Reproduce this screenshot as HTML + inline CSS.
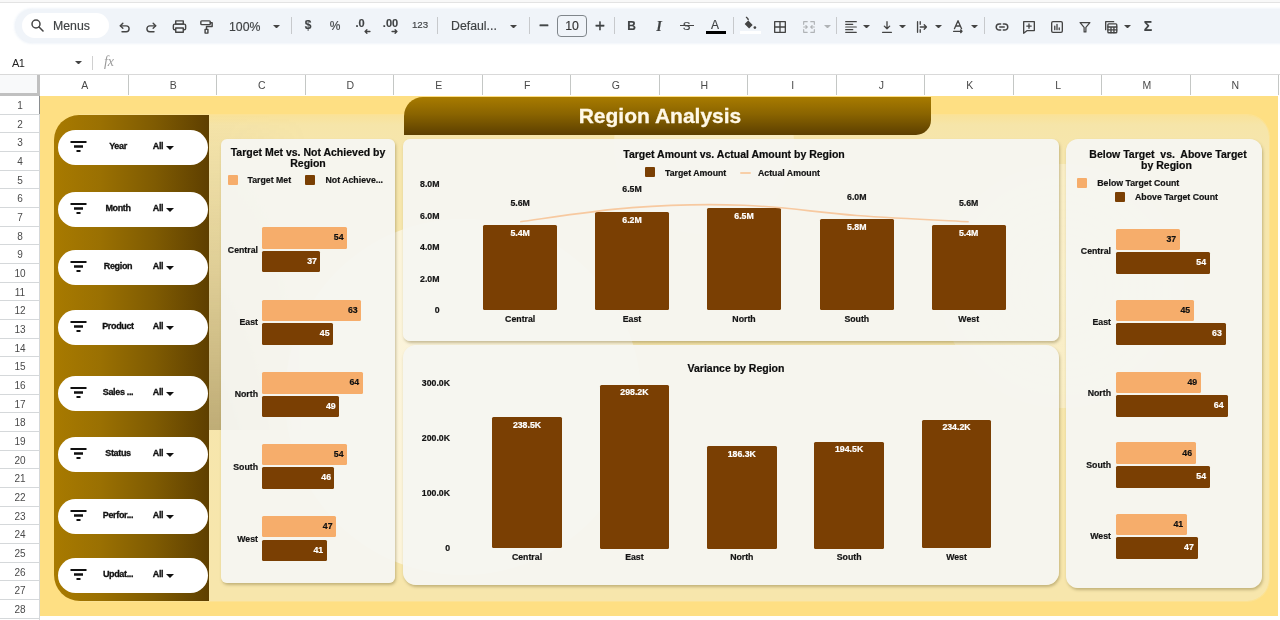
<!DOCTYPE html>
<html lang="en"><head><meta charset="utf-8"><title>Region Analysis</title>
<style>
*{box-sizing:border-box;margin:0;padding:0}
html,body{width:1280px;height:620px;overflow:hidden;background:#fff}
body{font-family:"Liberation Sans",Arial,sans-serif;position:relative;color:#222}
.abs{position:absolute}
.t{position:absolute;white-space:nowrap;line-height:10px;}
.c{transform:translate(-50%,-50%)}
.r{transform:translate(-100%,-50%)}
.l{transform:translate(0,-50%)}
.b{font-weight:bold}
.tb{color:#3f4244;font-size:12.3px;line-height:14px;-webkit-text-stroke:.15px currentColor}
.colh{position:absolute;top:75px;height:20px;border-right:1px solid #c4c7c5;font-size:10.5px;color:#4a4a4a;text-align:center;line-height:21px;background:#fff;padding-left:2px}
.rowh{position:absolute;left:0;width:40px;border-bottom:1px solid #d5d8da;font-size:10px;color:#4a4a4a;text-align:center;background:#fff}
.pill{position:absolute;left:58px;width:150px;height:35px;border-radius:17.5px;background:#fff}
.pill .t{font-size:9px;font-weight:bold;color:#111;top:16px;letter-spacing:-0.35px;-webkit-text-stroke:.3px #111}
.card{position:absolute;background:rgba(245,245,241,.95);box-shadow:1px 2px 3px rgba(110,95,40,.38)}
.ct{line-height:12px;font-size:10.5px;font-weight:bold;color:#0c0c0c;-webkit-text-stroke:.2px #0c0c0c}
.ax{font-size:8.75px;font-weight:bold;color:#141414;-webkit-text-stroke:.2px currentColor}
.bl{background:#f6ad6b;position:absolute;border-radius:1.5px}
.bd{background:#7a3f03;position:absolute;border-radius:1.5px}
.sep{position:absolute;top:17px;height:17px;width:1px;background:#c7c9cc}
</style></head><body>
<div id="root" style="position:absolute;left:0;top:0;width:1280px;height:620px;overflow:hidden;will-change:transform">

<div class="abs" style="left:0;top:0;width:1280px;height:3px;background:#f8f8f8;border-bottom:1px solid #e3e3e3"></div>
<div class="abs" style="left:15px;top:8.500px;width:1300px;height:34.500px;border-radius:17px;background:#f0f4f9;box-shadow:0 0 2px 1px rgba(240,244,249,.9)"></div>
<div class="abs" style="left:22px;top:13px;width:87px;height:25px;border-radius:12.500px;background:#fff"></div>
<svg class="abs" style="left:30px;top:18px" width="15" height="15" viewBox="0 0 15 15"><circle cx="6" cy="6" r="4" fill="none" stroke="#444" stroke-width="1.500"/><path d="M9 9 L13 13" stroke="#444" stroke-width="1.600" stroke-linecap="round"/></svg>
<div class="t l tb" style="left:53px;top:26px">Menus</div>
<div class="t l tb" style="left:229px;top:26.500px">100%</div>
<div class="t c tb b" style="left:308px;top:25px;font-size:12px">$</div>
<div class="t c tb" style="left:335px;top:25.500px;font-size:12px">%</div>
<div class="t c tb b" style="left:360px;top:22.700px;font-size:11px">.0</div>
<div class="t c tb b" style="left:390.500px;top:22.700px;font-size:11px">.00</div>
<div class="t c tb" style="left:420px;top:24.800px;font-size:9.700px">123</div>
<div class="t l tb" style="left:451px;top:25.500px">Defaul...</div>
<div class="abs" style="left:557px;top:15px;width:30px;height:22px;border:1px solid #80868b;border-radius:4px"></div>
<div class="t c tb" style="left:572px;top:26px;color:#333">10</div>
<div class="t c tb" style="left:544px;top:26px;font-size:17px;-webkit-text-stroke:.4px currentColor">&#8722;</div>
<div class="t c tb" style="left:600px;top:26px;font-size:17px;-webkit-text-stroke:.4px currentColor">+</div>
<div class="t c tb b" style="left:631.500px;top:26px;font-size:12px">B</div>
<div class="t c tb" style="left:659px;top:26px;font-size:14.5px;font-style:italic;font-weight:bold;font-family:'Liberation Serif',serif">I</div>
<div class="t c tb" style="left:686.500px;top:25.500px;font-size:11.500px">S</div>
<div class="abs" style="left:680px;top:24.800px;width:14px;height:1.400px;background:#444"></div>
<div class="t c tb" style="left:715px;top:24.500px;font-size:12px">A</div>
<div class="abs" style="left:705.500px;top:31px;width:20px;height:3px;background:#000"></div>
<div class="abs" style="left:740px;top:31px;width:21px;height:3px;background:#fff"></div>
<div class="t c tb b" style="left:1148px;top:26px;font-size:14px">&#931;</div>
<div class="sep" style="left:291px"></div>
<div class="sep" style="left:437px"></div>
<div class="sep" style="left:529px"></div>
<div class="sep" style="left:614px"></div>
<div class="sep" style="left:733px"></div>
<div class="sep" style="left:836px"></div>
<div class="sep" style="left:984px"></div>
<svg class="abs" style="left:272.5px;top:24.55px" width="7" height="3.5" viewBox="0 0 8 4"><path d="M0 0h8L4 4z" fill="#444"/></svg>
<svg class="abs" style="left:509.5px;top:24.55px" width="7" height="3.5" viewBox="0 0 8 4"><path d="M0 0h8L4 4z" fill="#444"/></svg>
<svg class="abs" style="left:863.0px;top:24.55px" width="7" height="3.5" viewBox="0 0 8 4"><path d="M0 0h8L4 4z" fill="#444"/></svg>
<svg class="abs" style="left:898.5px;top:24.55px" width="7" height="3.5" viewBox="0 0 8 4"><path d="M0 0h8L4 4z" fill="#444"/></svg>
<svg class="abs" style="left:934.5px;top:24.55px" width="7" height="3.5" viewBox="0 0 8 4"><path d="M0 0h8L4 4z" fill="#444"/></svg>
<svg class="abs" style="left:970.5px;top:24.55px" width="7" height="3.5" viewBox="0 0 8 4"><path d="M0 0h8L4 4z" fill="#444"/></svg>
<svg class="abs" style="left:1123.5px;top:24.55px" width="7" height="3.5" viewBox="0 0 8 4"><path d="M0 0h8L4 4z" fill="#444"/></svg>
<svg class="abs" style="left:823.5px;top:24.55px" width="7" height="3.5" viewBox="0 0 8 4"><path d="M0 0h8L4 4z" fill="#b0b3b6"/></svg>
<svg class="abs" style="left:116.5px;top:19.5px" width="15" height="15" viewBox="0 0 18 18" fill="none" stroke="#444" stroke-width="1.7" stroke-linecap="round" stroke-linejoin="round"><path d="M4 7h7a3.500 3.500 0 0 1 0 7H6"/><path d="M7 4L4 7l3 3"/></svg>
<svg class="abs" style="left:143.5px;top:19.5px" width="15" height="15" viewBox="0 0 18 18" fill="none" stroke="#444" stroke-width="1.7" stroke-linecap="round" stroke-linejoin="round"><path d="M14 7H7a3.500 3.500 0 0 0 0 7h5"/><path d="M11 4l3 3-3 3"/></svg>
<svg class="abs" style="left:171.0px;top:18.0px" width="17" height="17" viewBox="0 0 18 18" fill="none" stroke="#444" stroke-width="1.5" stroke-linecap="round" stroke-linejoin="round"><rect x="5" y="3" width="8" height="3.500"/><rect x="2.500" y="6.500" width="13" height="6" rx="1.500"/><rect x="5" y="10.500" width="8" height="4.500" fill="#f0f4f9"/></svg>
<svg class="abs" style="left:198.0px;top:18.0px" width="17" height="17" viewBox="0 0 18 18" fill="none" stroke="#444" stroke-width="1.5" stroke-linecap="round" stroke-linejoin="round"><rect x="3" y="3" width="10" height="4" rx="1"/><path d="M13 5h2v4H9v3"/><rect x="7.500" y="12" width="3" height="4"/></svg>
<svg class="abs" style="left:361.5px;top:25.7px" width="11" height="11" viewBox="0 0 18 18" fill="none" stroke="#444" stroke-width="2.2" stroke-linecap="round" stroke-linejoin="round"><path d="M5 9h8M8 6L5 9l3 3"/></svg>
<svg class="abs" style="left:389.0px;top:25.7px" width="11" height="11" viewBox="0 0 18 18" fill="none" stroke="#444" stroke-width="2.2" stroke-linecap="round" stroke-linejoin="round"><path d="M5 9h8M10 6l3 3-3 3"/></svg>
<svg class="abs" style="left:742.0px;top:15.5px" width="16" height="16" viewBox="0 0 18 18" fill="none" stroke="#444" stroke-width="1.5" stroke-linecap="round" stroke-linejoin="round"><path d="M5.500 3.500l6.500 6.500-4 4-5-5 5-5z" fill="#444" stroke="none"/><path d="M5 1.500l2 2"/><circle cx="14.500" cy="13" r="1.500" fill="#444" stroke="none"/></svg>
<svg class="abs" style="left:772.0px;top:18.5px" width="16" height="16" viewBox="0 0 18 18" fill="none" stroke="#444" stroke-width="1.5" stroke-linecap="round" stroke-linejoin="round"><rect x="3" y="3" width="12" height="12"/><path d="M9 3v12M3 9h12"/></svg>
<svg class="abs" style="left:801.0px;top:18.5px" width="16" height="16" viewBox="0 0 18 18" fill="none" stroke="#b0b3b6" stroke-width="1.3" stroke-linecap="round" stroke-linejoin="round"><path d="M7 3H3v3M11 3h4v3M7 15H3v-3M11 15h4v-3M3 9h4M5.500 7.500L7 9l-1.500 1.500M15 9h-4M12.500 7.500L11 9l1.500 1.500"/></svg>
<svg class="abs" style="left:843.0px;top:18.5px" width="16" height="16" viewBox="0 0 18 18" fill="none" stroke="#444" stroke-width="1.3" stroke-linecap="round" stroke-linejoin="round"><path d="M3 3h12M3 6h8M3 9h12M3 12h8M3 15h12"/></svg>
<svg class="abs" style="left:879.0px;top:18.5px" width="16" height="16" viewBox="0 0 18 18" fill="none" stroke="#444" stroke-width="1.5" stroke-linecap="round" stroke-linejoin="round"><path d="M9 3v8M6 8l3 3 3-3M4 15h10"/></svg>
<svg class="abs" style="left:914.0px;top:18.5px" width="16" height="16" viewBox="0 0 18 18" fill="none" stroke="#444" stroke-width="1.5" stroke-linecap="round" stroke-linejoin="round"><path d="M4 3v12M7 9h7M11.500 6.500l2.500 2.500-2.500 2.500M7 3v3M7 12v3"/></svg>
<svg class="abs" style="left:950.0px;top:18.0px" width="16" height="16" viewBox="0 0 18 18" fill="none" stroke="#444" stroke-width="1.5" stroke-linecap="round" stroke-linejoin="round"><path d="M5 12l4-9 4 9M6.500 9h5M4 15h9M12 13.500l1.500 1.500-1.500 1.500"/></svg>
<svg class="abs" style="left:993.5px;top:18.5px" width="16" height="16" viewBox="0 0 18 18" fill="none" stroke="#444" stroke-width="1.7" stroke-linecap="round" stroke-linejoin="round"><path d="M7.500 5.500H6a3.500 3.500 0 0 0 0 7h1.500M10.500 5.500H12a3.500 3.500 0 0 1 0 7h-1.500M6.500 9h5"/></svg>
<svg class="abs" style="left:1021.0px;top:18.5px" width="16" height="16" viewBox="0 0 18 18" fill="none" stroke="#444" stroke-width="1.5" stroke-linecap="round" stroke-linejoin="round"><path d="M3 3h12v10H7l-4 3z"/><path d="M9 5.500v5M6.500 8h5"/></svg>
<svg class="abs" style="left:1049.0px;top:18.5px" width="16" height="16" viewBox="0 0 18 18" fill="none" stroke="#444" stroke-width="1.5" stroke-linecap="round" stroke-linejoin="round"><rect x="3" y="3" width="12" height="12" rx="1.500"/><path d="M6.500 12V8M9 12V6M11.500 12v-2"/></svg>
<svg class="abs" style="left:1076.5px;top:18.5px" width="16" height="16" viewBox="0 0 18 18" fill="none" stroke="#444" stroke-width="1.4" stroke-linecap="round" stroke-linejoin="round"><path d="M3.500 4h11l-4.500 5.500V14.500H8V9.500z"/></svg>
<svg class="abs" style="left:1102.5px;top:18.5px" width="16" height="16" viewBox="0 0 18 18" fill="none" stroke="#444" stroke-width="1.5" stroke-linecap="round" stroke-linejoin="round"><path d="M3 12V3h9"/><rect x="5.500" y="5.500" width="10" height="10" rx="1"/><path d="M5.500 9h10M9 9v6.500M12.300 9v6.500M5.500 12.300h10"/></svg>
<div class="t l" style="left:12px;top:62.5px;font-size:11px;color:#222;letter-spacing:-0.5px">A1</div>
<svg class="abs" style="left:74.5px;top:60.75px" width="7" height="3.5" viewBox="0 0 8 4"><path d="M0 0h8L4 4z" fill="#444"/></svg>
<div class="abs" style="left:92px;top:56px;width:1px;height:14px;background:#d0d0d0"></div>
<div class="t c" style="left:109px;top:62px;font-size:14px;color:#9a9a9a;font-style:italic;font-family:'Liberation Serif',serif">fx</div>
<div class="abs" style="left:0;top:74px;width:1280px;height:1px;background:#d9d9d9"></div>
<div class="abs" style="left:0;top:75px;width:40px;height:21px;background:#f8f9fa;border-right:3px solid #c0c0c0;border-bottom:3px solid #c0c0c0"></div>
<div class="colh" style="left:40.0px;width:88.5px">A</div>
<div class="colh" style="left:128.5px;width:88.5px">B</div>
<div class="colh" style="left:217.0px;width:88.5px">C</div>
<div class="colh" style="left:305.5px;width:88.5px">D</div>
<div class="colh" style="left:394.0px;width:88.5px">E</div>
<div class="colh" style="left:482.5px;width:88.5px">F</div>
<div class="colh" style="left:571.0px;width:88.5px">G</div>
<div class="colh" style="left:659.5px;width:88.5px">H</div>
<div class="colh" style="left:748.0px;width:88.5px">I</div>
<div class="colh" style="left:836.5px;width:88.5px">J</div>
<div class="colh" style="left:925.0px;width:88.5px">K</div>
<div class="colh" style="left:1013.5px;width:88.5px">L</div>
<div class="colh" style="left:1102.0px;width:88.5px">M</div>
<div class="colh" style="left:1190.5px;width:88.5px">N</div>
<div class="rowh" style="top:96.00px;height:18.67px;line-height:19.37px">1</div>
<div class="rowh" style="top:114.67px;height:18.67px;line-height:19.37px">2</div>
<div class="rowh" style="top:133.34px;height:18.67px;line-height:19.37px">3</div>
<div class="rowh" style="top:152.01px;height:18.67px;line-height:19.37px">4</div>
<div class="rowh" style="top:170.68px;height:18.67px;line-height:19.37px">5</div>
<div class="rowh" style="top:189.35px;height:18.67px;line-height:19.37px">6</div>
<div class="rowh" style="top:208.02px;height:18.67px;line-height:19.37px">7</div>
<div class="rowh" style="top:226.69px;height:18.67px;line-height:19.37px">8</div>
<div class="rowh" style="top:245.36px;height:18.67px;line-height:19.37px">9</div>
<div class="rowh" style="top:264.03px;height:18.67px;line-height:19.37px">10</div>
<div class="rowh" style="top:282.70px;height:18.67px;line-height:19.37px">11</div>
<div class="rowh" style="top:301.37px;height:18.67px;line-height:19.37px">12</div>
<div class="rowh" style="top:320.04px;height:18.67px;line-height:19.37px">13</div>
<div class="rowh" style="top:338.71px;height:18.67px;line-height:19.37px">14</div>
<div class="rowh" style="top:357.38px;height:18.67px;line-height:19.37px">15</div>
<div class="rowh" style="top:376.05px;height:18.67px;line-height:19.37px">16</div>
<div class="rowh" style="top:394.72px;height:18.67px;line-height:19.37px">17</div>
<div class="rowh" style="top:413.39px;height:18.67px;line-height:19.37px">18</div>
<div class="rowh" style="top:432.06px;height:18.67px;line-height:19.37px">19</div>
<div class="rowh" style="top:450.73px;height:18.67px;line-height:19.37px">20</div>
<div class="rowh" style="top:469.40px;height:18.67px;line-height:19.37px">21</div>
<div class="rowh" style="top:488.07px;height:18.67px;line-height:19.37px">22</div>
<div class="rowh" style="top:506.74px;height:18.67px;line-height:19.37px">23</div>
<div class="rowh" style="top:525.41px;height:18.67px;line-height:19.37px">24</div>
<div class="rowh" style="top:544.08px;height:18.67px;line-height:19.37px">25</div>
<div class="rowh" style="top:562.75px;height:18.67px;line-height:19.37px">26</div>
<div class="rowh" style="top:581.42px;height:18.67px;line-height:19.37px">27</div>
<div class="rowh" style="top:600.09px;height:18.67px;line-height:19.37px">28</div>
<div class="abs" style="left:39px;top:96px;width:1px;height:524px;background:#d5d8da"></div>
<div class="abs" style="left:39px;top:96px;width:2px;height:18px;background:#8a8d90"></div>
<div class="abs" style="left:40px;top:96px;width:1238px;height:520px;background:#fedf83"></div>
<div class="abs" style="left:80px;top:114.5px;width:1189px;height:486.5px;border-radius:0 22px 22px 0;background:linear-gradient(180deg,#f9e299 0,#f6e5a9 10px,#f6e6ad 40px,#f7e6ac 100%);box-shadow:0 0 0 1px rgba(250,228,160,.6)"></div>
<div class="abs" style="left:54px;top:114px;width:1215px;height:487px;border-radius:24px 22px 22px 28px;background:radial-gradient(circle at 409px 283px,rgba(255,255,255,.56) 0,rgba(255,255,255,.56) 177.5px,rgba(255,255,255,0) 178.5px),radial-gradient(circle at 1008px 172px,rgba(255,255,255,.36) 0,rgba(255,255,255,.3) 121.5px,rgba(255,255,255,0) 122.5px),radial-gradient(circle at 650px 30px,rgba(255,255,255,.3) 0,rgba(255,255,255,.3) 89.5px,rgba(255,255,255,0) 90.5px)"></div>
<div class="abs" style="left:209px;top:115px;width:100px;height:315px;background:linear-gradient(180deg,rgba(140,120,70,0) 0%,rgba(140,120,70,.22) 50%,rgba(130,110,60,.48) 100%);-webkit-mask-image:linear-gradient(90deg,#000 0,#000 15%,rgba(0,0,0,.5) 60%,transparent 100%);mask-image:linear-gradient(90deg,#000 0,#000 15%,rgba(0,0,0,.5) 60%,transparent 100%)"></div>
<div class="abs" style="left:54px;top:115px;width:155px;height:486px;border-radius:25px 0 0 26px;background:linear-gradient(90deg,#a87a00 0%,#9a7002 30%,#7f5b02 65%,#5e3f00 100%)"></div>
<div class="pill" style="top:130px"><svg class="abs" style="left:11.5px;top:11px" width="18" height="13" viewBox="0 0 18 13"><path d="M0.5 0h16v2h-16zM4 4.3h9v2.4h-9zM6.5 9h4v2h-4z" fill="#111"/></svg><div class="t c" style="left:60px">Year</div><div class="t c" style="left:100px">All</div><svg class="abs" style="left:108px;top:16px" width="8" height="4" viewBox="0 0 8 4"><path d="M0 0h8L4 4z" fill="#111"/></svg></div>
<div class="pill" style="top:192px"><svg class="abs" style="left:11.5px;top:11px" width="18" height="13" viewBox="0 0 18 13"><path d="M0.5 0h16v2h-16zM4 4.3h9v2.4h-9zM6.5 9h4v2h-4z" fill="#111"/></svg><div class="t c" style="left:60px">Month</div><div class="t c" style="left:100px">All</div><svg class="abs" style="left:108px;top:16px" width="8" height="4" viewBox="0 0 8 4"><path d="M0 0h8L4 4z" fill="#111"/></svg></div>
<div class="pill" style="top:250.4px"><svg class="abs" style="left:11.5px;top:11px" width="18" height="13" viewBox="0 0 18 13"><path d="M0.5 0h16v2h-16zM4 4.3h9v2.4h-9zM6.5 9h4v2h-4z" fill="#111"/></svg><div class="t c" style="left:60px">Region</div><div class="t c" style="left:100px">All</div><svg class="abs" style="left:108px;top:16px" width="8" height="4" viewBox="0 0 8 4"><path d="M0 0h8L4 4z" fill="#111"/></svg></div>
<div class="pill" style="top:310px"><svg class="abs" style="left:11.5px;top:11px" width="18" height="13" viewBox="0 0 18 13"><path d="M0.5 0h16v2h-16zM4 4.3h9v2.4h-9zM6.5 9h4v2h-4z" fill="#111"/></svg><div class="t c" style="left:60px">Product</div><div class="t c" style="left:100px">All</div><svg class="abs" style="left:108px;top:16px" width="8" height="4" viewBox="0 0 8 4"><path d="M0 0h8L4 4z" fill="#111"/></svg></div>
<div class="pill" style="top:375.5px"><svg class="abs" style="left:11.5px;top:11px" width="18" height="13" viewBox="0 0 18 13"><path d="M0.5 0h16v2h-16zM4 4.3h9v2.4h-9zM6.5 9h4v2h-4z" fill="#111"/></svg><div class="t c" style="left:60px">Sales ...</div><div class="t c" style="left:100px">All</div><svg class="abs" style="left:108px;top:16px" width="8" height="4" viewBox="0 0 8 4"><path d="M0 0h8L4 4z" fill="#111"/></svg></div>
<div class="pill" style="top:437px"><svg class="abs" style="left:11.5px;top:11px" width="18" height="13" viewBox="0 0 18 13"><path d="M0.5 0h16v2h-16zM4 4.3h9v2.4h-9zM6.5 9h4v2h-4z" fill="#111"/></svg><div class="t c" style="left:60px">Status</div><div class="t c" style="left:100px">All</div><svg class="abs" style="left:108px;top:16px" width="8" height="4" viewBox="0 0 8 4"><path d="M0 0h8L4 4z" fill="#111"/></svg></div>
<div class="pill" style="top:499px"><svg class="abs" style="left:11.5px;top:11px" width="18" height="13" viewBox="0 0 18 13"><path d="M0.5 0h16v2h-16zM4 4.3h9v2.4h-9zM6.5 9h4v2h-4z" fill="#111"/></svg><div class="t c" style="left:60px">Perfor...</div><div class="t c" style="left:100px">All</div><svg class="abs" style="left:108px;top:16px" width="8" height="4" viewBox="0 0 8 4"><path d="M0 0h8L4 4z" fill="#111"/></svg></div>
<div class="pill" style="top:558px"><svg class="abs" style="left:11.5px;top:11px" width="18" height="13" viewBox="0 0 18 13"><path d="M0.5 0h16v2h-16zM4 4.3h9v2.4h-9zM6.5 9h4v2h-4z" fill="#111"/></svg><div class="t c" style="left:60px">Updat...</div><div class="t c" style="left:100px">All</div><svg class="abs" style="left:108px;top:16px" width="8" height="4" viewBox="0 0 8 4"><path d="M0 0h8L4 4z" fill="#111"/></svg></div>
<div class="abs" style="left:404px;top:97px;width:527px;height:38px;border-radius:19px 0 15px 0;background:linear-gradient(180deg,#a87b00 0%,#8a6400 45%,#5c3f00 100%)"></div>
<div class="t c b" style="left:660px;top:116px;font-size:21px;line-height:22px;color:#fff8e6;-webkit-text-stroke:.3px #fff8e6">Region Analysis</div>
<div class="card" style="left:221px;top:139px;width:174px;height:444px;border-radius:6px"></div>
<div class="card" style="left:403px;top:139px;width:656px;height:201.500px;border-radius:7px"></div>
<div class="card" style="left:403px;top:345px;width:656px;height:239.500px;border-radius:13px"></div>
<div class="card" style="left:1066px;top:139px;width:196px;height:449px;border-radius:12px"></div>
<div class="t c ct" style="left:308px;top:152.3px">Target Met vs. Not Achieved by</div>
<div class="t c ct" style="left:308px;top:163px">Region</div>
<div class="bl" style="left:228px;top:175px;width:10px;height:10px;border-radius:1px"></div>
<div class="t l ax" style="left:247.5px;top:179.500px">Target Met</div>
<div class="bd" style="left:305px;top:175px;width:10px;height:10px;border-radius:1px"></div>
<div class="t l ax" style="left:325.5px;top:179.500px">Not Achieve...</div>
<div class="t r ax" style="left:258px;top:250.3px">Central</div>
<div class="bl" style="left:262.2px;top:227.0px;width:84.9px;height:21.7px"></div>
<div class="bd" style="left:262.2px;top:250.7px;width:58.2px;height:21.6px"></div>
<div class="t r ax" style="left:343.6px;top:237.2px;color:#111">54</div>
<div class="t r ax" style="left:316.9px;top:260.8px;color:#fff">37</div>
<div class="t r ax" style="left:258px;top:321.8px">East</div>
<div class="bl" style="left:262.2px;top:299.5px;width:99.0px;height:21.7px"></div>
<div class="bd" style="left:262.2px;top:323.2px;width:70.8px;height:21.6px"></div>
<div class="t r ax" style="left:357.7px;top:309.7px;color:#111">63</div>
<div class="t r ax" style="left:329.5px;top:333.3px;color:#fff">45</div>
<div class="t r ax" style="left:258px;top:394.3px">North</div>
<div class="bl" style="left:262.2px;top:372.0px;width:100.5px;height:21.7px"></div>
<div class="bd" style="left:262.2px;top:395.7px;width:77.0px;height:21.6px"></div>
<div class="t r ax" style="left:359.2px;top:382.2px;color:#111">64</div>
<div class="t r ax" style="left:335.7px;top:405.8px;color:#fff">49</div>
<div class="t r ax" style="left:258px;top:466.9px">South</div>
<div class="bl" style="left:262.2px;top:443.6px;width:84.9px;height:21.7px"></div>
<div class="bd" style="left:262.2px;top:467.3px;width:72.3px;height:21.6px"></div>
<div class="t r ax" style="left:343.6px;top:453.8px;color:#111">54</div>
<div class="t r ax" style="left:331.0px;top:477.4px;color:#fff">46</div>
<div class="t r ax" style="left:258px;top:539.1px">West</div>
<div class="bl" style="left:262.2px;top:515.8px;width:73.9px;height:21.7px"></div>
<div class="bd" style="left:262.2px;top:539.5px;width:64.5px;height:21.6px"></div>
<div class="t r ax" style="left:332.6px;top:526.0px;color:#111">47</div>
<div class="t r ax" style="left:323.2px;top:549.6px;color:#fff">41</div>
<div class="t c ct" style="left:1168px;top:154.2px">Below Target&nbsp; vs.&nbsp; Above Target</div>
<div class="t c ct" style="left:1166.5px;top:164.8px">by Region</div>
<div class="bl" style="left:1077px;top:178px;width:10px;height:10px;border-radius:1px"></div>
<div class="t l ax" style="left:1097.3px;top:182.6px">Below Target Count</div>
<div class="bd" style="left:1115px;top:192px;width:10px;height:10px;border-radius:1px"></div>
<div class="t l ax" style="left:1135px;top:196.6px">Above Target Count</div>
<div class="t r ax" style="left:1111px;top:251.2px">Central</div>
<div class="bl" style="left:1115.5px;top:228.7px;width:64.8px;height:21.700px"></div>
<div class="bd" style="left:1115.5px;top:252.4px;width:94.5px;height:21.500px"></div>
<div class="t r ax" style="left:1176.2px;top:239.2px;color:#111">37</div>
<div class="t r ax" style="left:1206.0px;top:262.3px;color:#fff">54</div>
<div class="t r ax" style="left:1111px;top:322.0px">East</div>
<div class="bl" style="left:1115.5px;top:299.5px;width:78.8px;height:21.700px"></div>
<div class="bd" style="left:1115.5px;top:323.2px;width:110.2px;height:21.500px"></div>
<div class="t r ax" style="left:1190.2px;top:310.0px;color:#111">45</div>
<div class="t r ax" style="left:1221.8px;top:333.1px;color:#fff">63</div>
<div class="t r ax" style="left:1111px;top:393.0px">North</div>
<div class="bl" style="left:1115.5px;top:371.5px;width:85.8px;height:21.700px"></div>
<div class="bd" style="left:1115.5px;top:395.2px;width:112.0px;height:21.500px"></div>
<div class="t r ax" style="left:1197.2px;top:382.0px;color:#111">49</div>
<div class="t r ax" style="left:1223.5px;top:405.1px;color:#fff">64</div>
<div class="t r ax" style="left:1111px;top:464.8px">South</div>
<div class="bl" style="left:1115.5px;top:442.3px;width:80.5px;height:21.700px"></div>
<div class="bd" style="left:1115.5px;top:466.0px;width:94.5px;height:21.500px"></div>
<div class="t r ax" style="left:1192.0px;top:452.8px;color:#111">46</div>
<div class="t r ax" style="left:1206.0px;top:475.9px;color:#fff">54</div>
<div class="t r ax" style="left:1111px;top:536.1px">West</div>
<div class="bl" style="left:1115.5px;top:513.6px;width:71.8px;height:21.700px"></div>
<div class="bd" style="left:1115.5px;top:537.3px;width:82.2px;height:21.500px"></div>
<div class="t r ax" style="left:1183.2px;top:524.1px;color:#111">41</div>
<div class="t r ax" style="left:1193.8px;top:547.2px;color:#fff">47</div>
<div class="t c ct" style="left:734px;top:154.3px">Target Amount vs. Actual Amount by Region</div>
<div class="bd" style="left:645px;top:167px;width:10px;height:10px;border-radius:1px"></div>
<div class="t l ax" style="left:665px;top:173px">Target Amount</div>
<div class="abs" style="left:740px;top:171.500px;width:11px;height:2.500px;background:#f8cfa8;border-radius:1px"></div>
<div class="t l ax" style="left:758px;top:173px">Actual Amount</div>
<div class="t r ax" style="left:439.5px;top:183.6px">8.0M</div>
<div class="t r ax" style="left:439.5px;top:215.6px">6.0M</div>
<div class="t r ax" style="left:439.5px;top:246.6px">4.0M</div>
<div class="t r ax" style="left:439.5px;top:278.6px">2.0M</div>
<div class="t r ax" style="left:439.5px;top:309.6px">0</div>
<div class="bd" style="left:483.2px;top:224.9px;width:74px;height:85.1px"></div>
<div class="t c ax" style="left:520.2px;top:232.9px;color:#fff">5.4M</div>
<div class="t c ax" style="left:520.2px;top:318.600px">Central</div>
<div class="t c ax" style="left:520.2px;top:202.8px">5.6M</div>
<div class="bd" style="left:595.0px;top:212.3px;width:74px;height:97.7px"></div>
<div class="t c ax" style="left:632.0px;top:220.3px;color:#fff">6.2M</div>
<div class="t c ax" style="left:632.0px;top:318.600px">East</div>
<div class="t c ax" style="left:632.0px;top:188.6px">6.5M</div>
<div class="bd" style="left:707.0px;top:207.6px;width:74px;height:102.4px"></div>
<div class="t c ax" style="left:744.0px;top:215.6px;color:#fff">6.5M</div>
<div class="t c ax" style="left:744.0px;top:318.600px">North</div>
<div class="bd" style="left:819.8px;top:218.7px;width:74px;height:91.3px"></div>
<div class="t c ax" style="left:856.8px;top:226.7px;color:#fff">5.8M</div>
<div class="t c ax" style="left:856.8px;top:318.600px">South</div>
<div class="t c ax" style="left:856.8px;top:196.5px">6.0M</div>
<div class="bd" style="left:931.7px;top:224.9px;width:74px;height:85.1px"></div>
<div class="t c ax" style="left:968.7px;top:232.9px;color:#fff">5.4M</div>
<div class="t c ax" style="left:968.7px;top:318.600px">West</div>
<div class="t c ax" style="left:968.7px;top:202.8px">5.6M</div>
<svg class="abs" style="left:0;top:0" width="1280" height="620" viewBox="0 0 1280 620"><path d="M520.2 221.8 C540.3 219.2 591.7 210.6 632.0 207.6 C672.3 204.6 703.5 203.8 744.0 205.3 C784.5 206.7 816.4 212.5 856.8 215.5 C897.2 218.5 948.6 220.7 968.7 221.8" fill="none" stroke="#f7c9a0" stroke-width="1.600"/></svg>
<div class="t c ct" style="left:736px;top:368.100px">Variance by Region</div>
<div class="t r ax" style="left:450px;top:382.6px">300.0K</div>
<div class="t r ax" style="left:450px;top:437.6px">200.0K</div>
<div class="t r ax" style="left:450px;top:492.6px">100.0K</div>
<div class="t r ax" style="left:450px;top:547.6px">0</div>
<div class="bd" style="left:492.3px;top:417.3px;width:69.700px;height:131.2px"></div>
<div class="t c ax" style="left:527.0px;top:424.8px;color:#fff">238.5K</div>
<div class="t c ax" style="left:527.0px;top:557px">Central</div>
<div class="bd" style="left:599.6px;top:384.5px;width:69.700px;height:164.0px"></div>
<div class="t c ax" style="left:634.4px;top:392.0px;color:#fff">298.2K</div>
<div class="t c ax" style="left:634.4px;top:557px">East</div>
<div class="bd" style="left:707.0px;top:446.0px;width:69.700px;height:102.5px"></div>
<div class="t c ax" style="left:741.8px;top:453.5px;color:#fff">186.3K</div>
<div class="t c ax" style="left:741.8px;top:557px">North</div>
<div class="bd" style="left:814.3px;top:441.5px;width:69.700px;height:107.0px"></div>
<div class="t c ax" style="left:849.1px;top:449.0px;color:#fff">194.5K</div>
<div class="t c ax" style="left:849.1px;top:557px">South</div>
<div class="bd" style="left:921.7px;top:419.7px;width:69.700px;height:128.8px"></div>
<div class="t c ax" style="left:956.5px;top:427.2px;color:#fff">234.2K</div>
<div class="t c ax" style="left:956.5px;top:557px">West</div>
</div></body></html>
